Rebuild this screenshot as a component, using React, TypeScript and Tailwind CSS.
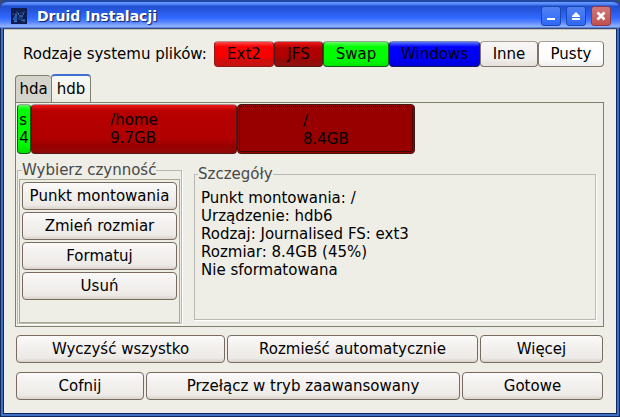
import React, { useState } from 'react';

interface Partition {
  id: string;
  mount: string;
  size: string;
  percent: number;
  style: string;
}

const fileSystems = [
  {
    name: 'Ext2',
    style: 'w-[60px] border-[#901818] border-t-[#b89090] bg-[linear-gradient(#ff4848,#f80000_20%,#f80000_60%,#d00c0c_75%,#c81010)]',
  },
  {
    name: 'JFS',
    style: 'w-[49px] border-[#501818] border-t-[#a89090] bg-[linear-gradient(#f01818,#b40000_25%,#b00000_60%,#980808_75%,#901010)]',
  },
  {
    name: 'Swap',
    style: 'w-[66px] border-[#185818] border-t-[#90a890] bg-[linear-gradient(#60ff60,#00ff00_20%,#00fc00_70%,#00e400)]',
  },
  {
    name: 'Windows',
    style: 'w-[91px] border-[#181858] border-t-[#7888b8] bg-[linear-gradient(#5878ff,#0000ff_20%,#0000f8_70%,#0000d8)]',
  },
  { name: 'Inne', style: 'w-[58px] border-[#807468] border-t-[#a8a098] bg-[linear-gradient(#f8f7f6,#f0eeec_70%,#e4e0da)]' },
  { name: 'Pusty', style: 'w-[66px] border-[#807468] border-t-[#a8a098] bg-[linear-gradient(#ffffff,#fcfcfc_70%,#f0efee)]' },
];

const partitions: Partition[] = [
  {
    id: 'hdb1',
    mount: 's',
    size: '4',
    percent: 2.4,
    style: 'border-[#185818] border-t-[#90a890] bg-[linear-gradient(#60ff60,#00ff00_10%,#00fc00_80%,#00e000)]',
  },
  {
    id: 'hdb5',
    mount: '/home',
    size: '9.7GB',
    percent: 35.2,
    style: 'border-[#501818] border-t-[#a89090] bg-[linear-gradient(#f01818,#b80000_12%,#b00000_70%,#980000_85%,#900808)]',
  },
  {
    id: 'hdb6',
    mount: '/',
    size: '8.4GB',
    percent: 30.4,
    style: 'border-[#401818] bg-[#980000] pt-[2px] outline-1 -outline-offset-3 outline-dotted outline-black',
  },
];

const actions = ['Punkt montowania', 'Zmień rozmiar', 'Formatuj', 'Usuń'];

const details = ['Punkt montowania: /', 'Urządzenie: hdb6', 'Rodzaj: Journalised FS: ext3', 'Rozmiar: 8.4GB (45%)', 'Nie sformatowana'];

const Button = ({ children, className = '' }: { children: React.ReactNode; className?: string }) => (
  <button
    type="button"
    className={`h-7 shrink-0 rounded border border-[#766c60] bg-[linear-gradient(#fbfaf9,#f3f1ef_40%,#edeae6_85%,#d9d2ca)] whitespace-nowrap ${className}`}
  >
    {children}
  </button>
);

const WindowIcon = () => (
  <svg className="size-4" viewBox="0 0 16 16" aria-hidden="true">
    <rect width="16" height="16" fill="#101c50" />
    <path d="M1 5h3v2H1zM5 3h2v3H5zM9 4h3v2H9zM12 3h2v2h-2zM7 9h5v3H7z" fill="#1c3870" />
    <path d="M3 8h3v5H3zM8 7h4v2H8zM12 11h2v3h-2z" fill="#2458a8" />
    <path d="M4 6h2v2H4zM2 10h1v2H2zM12 5h1v2h-1zM10 12h2v1h-2z" fill="#506070" />
    <path d="M3 13h3v1H3zM7 5h1v2H7z" fill="#3880d8" />
  </svg>
);

const TitleBar = () => (
  <header className="flex h-7 items-center rounded-t-lg border-t-2 border-[#2048a0] bg-[linear-gradient(#6898ff,#5888f8_8%,#2050d0_16%,#2858e0_35%,#3068ff_60%,#5080ff_75%,#90b0ff_94%,#4870d0)] pr-[9px] pl-[11px] pt-px">
    <WindowIcon />
    <h1 className="ml-[10px] flex-1 text-sm font-bold text-white [text-shadow:1px_1px_1px_#102060]">Druid Instalacji</h1>
    <div className="flex gap-[5px]">
      <button type="button" aria-label="Minimalizuj" className="size-5 rounded-[3px] border border-[#1848b0] bg-linear-to-b from-[#5080f0] to-[#3068ff]">
        <svg viewBox="0 0 18 18" fill="#fff"><path d="M5 11h8v2H5z" /></svg>
      </button>
      <button type="button" aria-label="Maksymalizuj" className="size-5 rounded-[3px] border border-[#1848b0] bg-linear-to-b from-[#5080f0] to-[#3068ff]">
        <svg viewBox="0 0 18 18" fill="#fff"><path d="M9 5l4 4v1H5V9zM5 11h8v2H5z" /></svg>
      </button>
      <button type="button" aria-label="Zamknij" className="size-5 rounded-[3px] border border-[#883850] bg-linear-to-b from-[#d07878] to-[#c05050]">
        <svg viewBox="0 0 18 18" stroke="#fff" strokeWidth="2.6"><path d="M5.500 5.500l7 7M12.500 5.500l-7 7" /></svg>
      </button>
    </div>
  </header>
);

const App = () => {
  const [disk, setDisk] = useState('hdb');

  return (
    <div className="flex min-h-screen flex-col bg-[#384878] font-['DejaVu_Sans',sans-serif] text-[15px] leading-[18px] text-black">
      <TitleBar />
      <div className="flex flex-1 border-x border-b border-[#102860] bg-[#102860]">
        <main className="flex flex-1 flex-col border-x-2 border-b-2 border-[#4070c0] bg-[#eeeee6] pt-[13px] pr-[13px] pl-3 shadow-[inset_0_1px_0_#384878,inset_1px_0_0_#102860,inset_-1px_-1px_0_#102860,inset_0_2px_0_#c8c4b8]">
          <div className="flex items-center justify-between pl-2">
            <span className="whitespace-nowrap">Rodzaje systemu plików:</span>
            <div className="flex">
              {fileSystems.map((fs) => (
                <button key={fs.name} type="button" className={`h-[26px] rounded border whitespace-nowrap ${fs.style}`}>
                  {fs.name}
                </button>
              ))}
            </div>
          </div>

          <div role="tablist" className="-mb-px mt-[7px] flex items-end">
            {['hda', 'hdb'].map((name) => (
              <button
                key={name}
                type="button"
                role="tab"
                aria-selected={disk === name}
                onClick={() => setDisk(name)}
                className={
                  disk === name
                    ? 'h-[29px] w-10 rounded-t border border-t-2 border-[#808070] border-t-[#4070d0] border-b-[#eeeee6] bg-linear-to-b from-[#f8f8f6] to-[#eeeee6] pb-px'
                    : 'h-7 w-9 rounded-t border border-r-0 border-[#808070] bg-[#d4d4cc]'
                }
              >
                {name}
              </button>
            ))}
          </div>

          <section className="border border-[#808070] px-px pt-px pb-[2px]">
            <div className="flex h-[50px]">
              {partitions.map((p) => (
                <button
                  key={p.id}
                  type="button"
                  className={`flex items-center justify-center overflow-hidden rounded border text-left ${p.style}`}
                  style={{ width: `${p.percent}%` }}
                >
                  <span>
                    {p.mount}
                    <br />
                    {p.size}
                  </span>
                </button>
              ))}
            </div>

            <div className="mt-[7px] flex">
              <fieldset className="w-[165px] border border-[#b8b8b4] px-px shadow-[1px_1px_0_#fff]">
                <legend className="ml-[3px] whitespace-nowrap text-[#484848]">Wybierz czynność</legend>
                <div className="flex h-[144px] flex-col gap-[2px] border border-[#a8a890] p-[2px]">
                  {actions.map((action) => (
                    <Button key={action}>{action}</Button>
                  ))}
                </div>
              </fieldset>
              <fieldset className="mt-1 mr-[6px] mb-1 ml-3 flex-1 border border-[#b8b8b4] px-[6px] pt-[6px] shadow-[1px_1px_0_#fff]">
                <legend className="-ml-[3px] text-[#484848]">Szczegóły</legend>
                {details.map((line) => (
                  <p key={line}>{line}</p>
                ))}
              </fieldset>
            </div>
          </section>

          <div className="mt-2 flex gap-[2px] px-px">
            <Button className="w-[209px]">Wyczyść wszystko</Button>
            <Button className="flex-1">Rozmieść automatycznie</Button>
            <Button className="w-[123px]">Więcej</Button>
          </div>
          <div className="mt-[9px] flex gap-[2px] px-px">
            <Button className="w-[128px]">Cofnij</Button>
            <Button className="flex-1">Przełącz w tryb zaawansowany</Button>
            <Button className="w-[141px]">Gotowe</Button>
          </div>
        </main>
      </div>
    </div>
  );
};

export default App;
